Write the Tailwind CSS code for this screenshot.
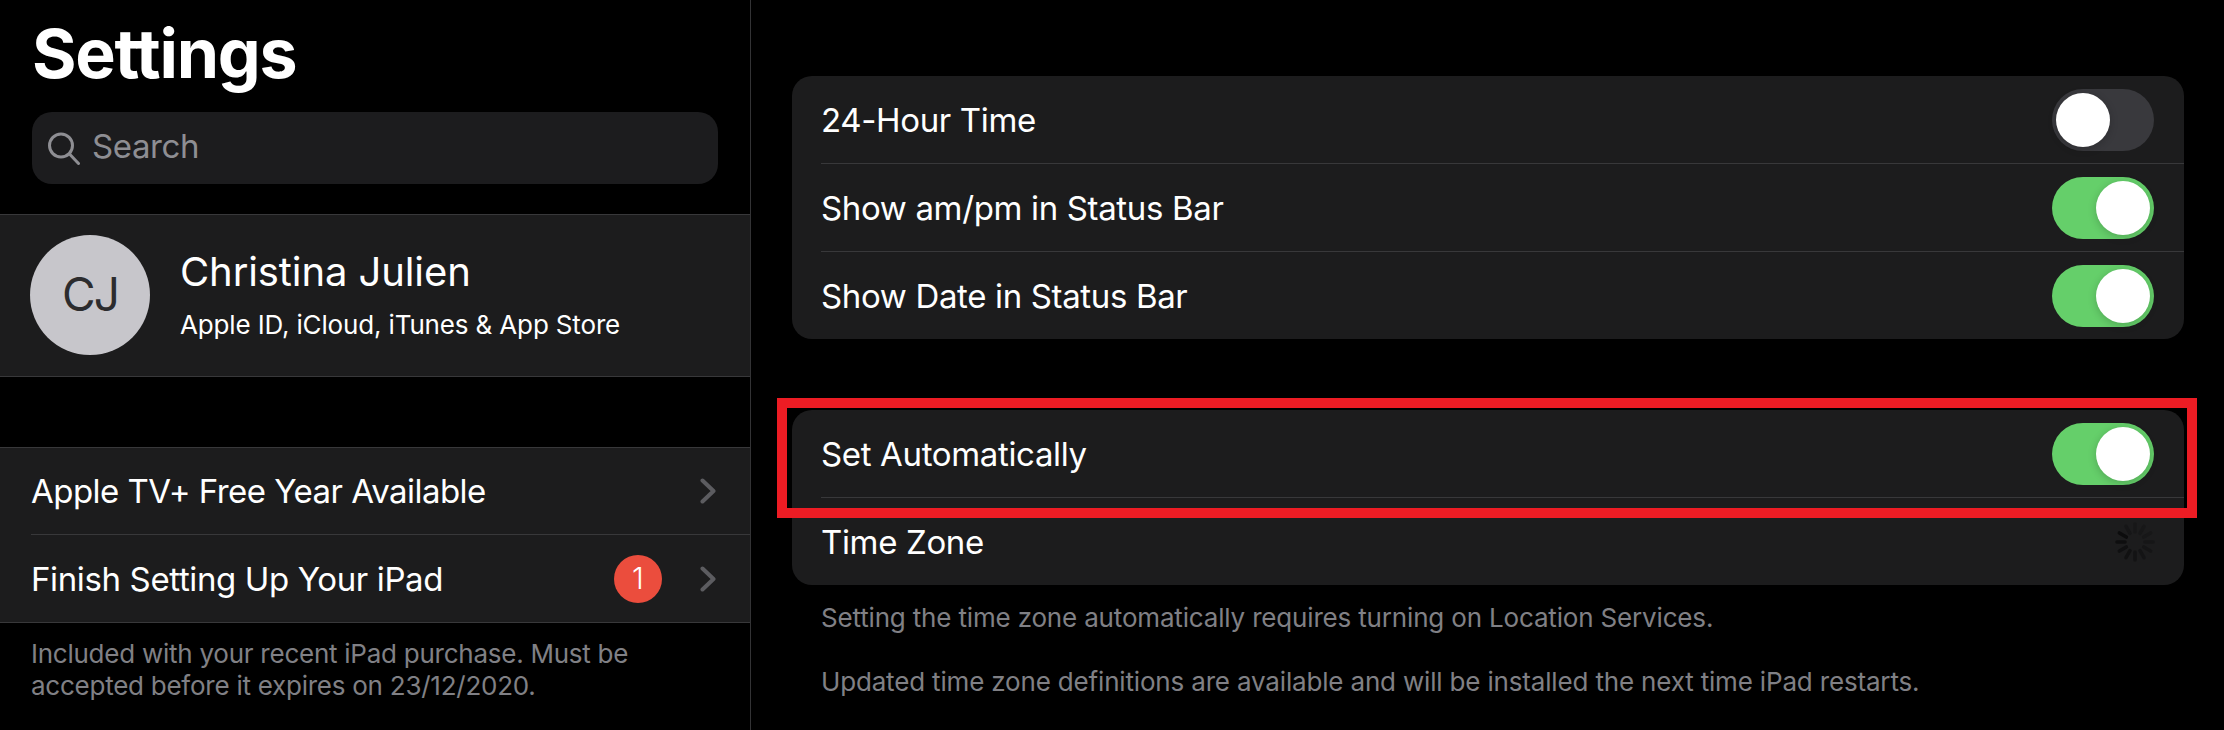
<!DOCTYPE html>
<html lang="en">
<head>
  <meta charset="UTF-8" />
  <title>Settings</title>
  <script src="https://cdn.jsdelivr.net/npm/@tailwindcss/browser@4"></script>
</head>
<body class="bg-black">
<div class="relative flex h-[730px] w-[2224px] overflow-hidden bg-black font-['Inter',sans-serif] text-white">

  <!-- Sidebar -->
  <aside class="w-[751px] shrink-0 border-r border-[#333335]">
    <h1 class="h-[112px] pl-[32px] pt-[12px] text-[68px] leading-[82px] font-bold tracking-[-1.25px]">Settings</h1>
    <div class="ml-[32px] flex h-[72px] w-[686px] items-center rounded-[20px] bg-[#1c1c1e]">
      <svg class="ml-[15px] h-[33px] w-[33px]" viewBox="0 0 33 33" fill="none" stroke="#8e8e93" stroke-width="3" stroke-linecap="round">
        <circle cx="14" cy="13.5" r="11.5" />
        <path d="M22.5 22l9 9.5" />
      </svg>
      <span class="mb-[2px] ml-[12px] text-[33px] tracking-[-0.4px] text-[#8e8e93]">Search</span>
    </div>

    <!-- Profile -->
    <div class="mt-[30px] flex h-[163px] items-center border-y border-[#38383a] bg-[#1c1c1d] pb-[2px] pl-[30px]">
      <div class="flex h-[120px] w-[120px] items-center justify-center rounded-full bg-[#c7c6cb] text-[46px] tracking-[-2px] text-[#2c2c2e]">CJ</div>
      <div class="ml-[30px]">
        <div class="text-[40px] leading-[48px] tracking-[-0.1px]">Christina Julien</div>
        <div class="mt-[13px] text-[26px] leading-[32px] tracking-[-0.15px]">Apple ID, iCloud, iTunes &amp; App Store</div>
      </div>
    </div>

    <!-- Offer rows -->
    <div class="mt-[70px] border-y border-[#38383a] bg-[#1c1c1d] pl-[31px]">
      <div class="flex h-[87px] items-center border-b border-[#38383a] pr-[34px] text-[33px]">
        <span class="flex-1 pt-[2px] tracking-[-0.54px]">Apple TV+ Free Year Available</span>
        <svg class="h-[26px] w-[16px]" viewBox="0 0 16 26" fill="none" stroke="#5c5c60" stroke-width="4" stroke-linecap="round" stroke-linejoin="round"><path d="M2.5 2.5L13.5 13 2.5 23.5" /></svg>
      </div>
      <div class="flex h-[87px] items-center pr-[34px] text-[33px]">
        <span class="flex-1 pt-[2px] tracking-[-0.37px]">Finish Setting Up Your iPad</span>
        <span class="mr-[38px] flex h-[48px] w-[48px] items-center justify-center rounded-full bg-[#eb4d3d] text-[30px] font-light">1</span>
        <svg class="h-[26px] w-[16px]" viewBox="0 0 16 26" fill="none" stroke="#5c5c60" stroke-width="4" stroke-linecap="round" stroke-linejoin="round"><path d="M2.5 2.5L13.5 13 2.5 23.5" /></svg>
      </div>
    </div>
    <p class="mt-[15px] pl-[31px] text-[26px] leading-[32px] tracking-[-0.25px] text-[#808085]">Included with your recent iPad purchase. Must be<br />accepted before it expires on 23/12/2020.</p>
  </aside>

  <!-- Detail pane -->
  <main class="flex-1 pt-[76px] pl-[41px] pr-[40px]">
    <section class="rounded-[20px] bg-[#1c1c1d] pl-[29px]">
      <div class="flex h-[88px] items-center border-b border-[#38383a] pr-[30px] text-[33px]">
        <span class="flex-1 pt-[2px] tracking-[-0.35px]">24-Hour Time</span>
        <span class="flex h-[62px] w-[102px] items-center justify-start rounded-full bg-[#39393d] p-[4px]"><span class="h-[54px] w-[54px] rounded-full bg-white shadow-[0_2px_8px_rgba(0,0,0,0.2)]"></span></span>
      </div>
      <div class="flex h-[88px] items-center border-b border-[#38383a] pr-[30px] text-[33px]">
        <span class="flex-1 pt-[2px] tracking-[-0.35px]">Show am/pm in Status Bar</span>
        <span class="flex h-[62px] w-[102px] items-center justify-end rounded-full bg-[#65cf6a] p-[4px]"><span class="h-[54px] w-[54px] rounded-full bg-white shadow-[0_2px_8px_rgba(0,0,0,0.2)]"></span></span>
      </div>
      <div class="flex h-[87px] items-center pr-[30px] text-[33px]">
        <span class="flex-1 pt-[2px] tracking-[-0.35px]">Show Date in Status Bar</span>
        <span class="flex h-[62px] w-[102px] items-center justify-end rounded-full bg-[#65cf6a] p-[4px]"><span class="h-[54px] w-[54px] rounded-full bg-white shadow-[0_2px_8px_rgba(0,0,0,0.2)]"></span></span>
      </div>
    </section>

    <section class="mt-[71px] rounded-[20px] bg-[#1c1c1d] pl-[29px]">
      <div class="flex h-[88px] items-center border-b border-[#38383a] pr-[30px] text-[33px]">
        <span class="flex-1 pt-[2px] tracking-[-0.35px]">Set Automatically</span>
        <span class="flex h-[62px] w-[102px] items-center justify-end rounded-full bg-[#65cf6a] p-[4px]"><span class="h-[54px] w-[54px] rounded-full bg-white shadow-[0_2px_8px_rgba(0,0,0,0.2)]"></span></span>
      </div>
      <div class="flex h-[87px] items-center pr-[30px] text-[33px]">
        <span class="flex-1 pt-[2px] tracking-[-0.35px]">Time Zone</span>
        <svg class="-mr-[2px] h-[42px] w-[42px]" viewBox="-21 -21 42 42" fill="none" stroke="#0c0c0d" stroke-width="3.6" stroke-linecap="round">
          <path opacity="0.3" d="M0 -10V-18" />
          <path opacity="0.3" d="M5 -8.7L9 -15.6" />
          <path opacity="0.3" d="M8.7 -5L15.6 -9" />
          <path opacity="0.35" d="M10 0H18" />
          <path opacity="0.4" d="M8.7 5L15.6 9" />
          <path opacity="0.45" d="M5 8.7L9 15.6" />
          <path opacity="0.55" d="M0 10V18" />
          <path opacity="0.65" d="M-5 8.7L-9 15.6" />
          <path opacity="0.75" d="M-8.7 5L-15.6 9" />
          <path opacity="0.85" d="M-10 0H-18" />
          <path d="M-8.7 -5L-15.6 -9" />
          <path opacity="0.35" d="M-5 -8.7L-9 -15.6" />
        </svg>
      </div>
    </section>

    <p class="mt-[17px] pl-[29px] text-[26px] leading-[32px] tracking-[-0.17px] text-[#808085]">Setting the time zone automatically requires turning on Location Services.</p>
    <p class="mt-[32px] pl-[29px] text-[26px] leading-[32px] tracking-[-0.17px] text-[#808085]">Updated time zone definitions are available and will be installed the next time iPad restarts.</p>
  </main>

  <!-- Red annotation box drawn over the screenshot -->
  <div class="absolute top-[398px] left-[777px] h-[120px] w-[1420px] border-[10px] border-[#ed1c24]"></div>
</div>
</body>
</html>
